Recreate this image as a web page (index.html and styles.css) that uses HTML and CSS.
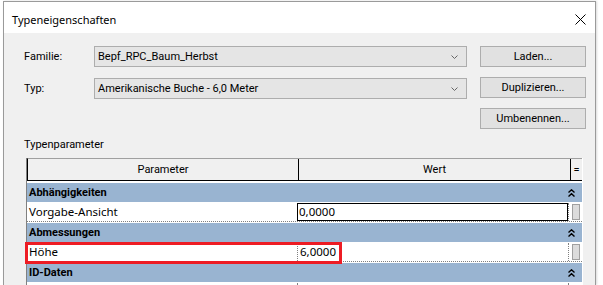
FILE: index.html
```html
<!DOCTYPE html>
<html>
    <head>
        <title>Typeneigenschaften</title>
        <link rel="stylesheet" href="styles.css">
    </head>
    <body>
        <div class="window">
            <div class="titlebar">
                <div class="title">Typeneigenschaften</div>
                <svg class="close" width="11" height="11" viewBox="0 0 11 11"><path d="M0.5 0.5 L10.5 10.5 M10.5 0.5 L0.5 10.5" stroke="#000" stroke-width="1" fill="none"/></svg>
            </div>
            <div class="content">
                <div class="top">
                    <div class="fields">
                        <div class="field">
                            <div class="label">Familie:</div>
                            <div class="select"><span>Bepf_RPC_Baum_Herbst</span><svg width="7" height="4" viewBox="0 0 7 4"><path d="M0.5 0.5 L3.5 3.5 L6.5 0.5" stroke="#666" fill="none"/></svg></div>
                        </div>
                        <div class="field">
                            <div class="label">Typ:</div>
                            <div class="select"><span>Amerikanische Buche - 6,0 Meter</span><svg width="7" height="4" viewBox="0 0 7 4"><path d="M0.5 0.5 L3.5 3.5 L6.5 0.5" stroke="#666" fill="none"/></svg></div>
                        </div>
                    </div>
                    <div class="buttons">
                        <div class="button">Laden...</div>
                        <div class="button">Duplizieren...</div>
                        <div class="button">Umbenennen...</div>
                    </div>
                </div>
                <div class="section-label">Typenparameter</div>
                <div class="grid">
                    <div class="grid-head">
                        <div class="col-name">Parameter</div>
                        <div class="col-value">Wert</div>
                        <div class="col-eq">=</div>
                    </div>
                    <div class="grid-body">
                        <div class="cat">
                            <span>Abhängigkeiten</span>
                            <svg class="fold" width="7" height="8" viewBox="0 0 7 8"><path d="M0.5 3.5 L3.5 0.8 L6.5 3.5 M0.5 7.5 L3.5 4.8 L6.5 7.5" stroke="#000" stroke-width="1.4" fill="none"/></svg>
                        </div>
                        <div class="row">
                            <div class="cell-name">Vorgabe-Ansicht</div>
                            <div class="cell-value editing">0,0000</div>
                            <div class="cell-btn"><span class="mini"></span></div>
                        </div>
                        <div class="cat">
                            <span>Abmessungen</span>
                            <svg class="fold" width="7" height="8" viewBox="0 0 7 8"><path d="M0.5 3.5 L3.5 0.8 L6.5 3.5 M0.5 7.5 L3.5 4.8 L6.5 7.5" stroke="#000" stroke-width="1.4" fill="none"/></svg>
                        </div>
                        <div class="row">
                            <div class="cell-name">Höhe</div>
                            <div class="cell-value">6,0000</div>
                            <div class="cell-btn"><span class="mini"></span></div>
                        </div>
                        <div class="cat">
                            <span>ID-Daten</span>
                            <svg class="fold" width="7" height="8" viewBox="0 0 7 8"><path d="M0.5 3.5 L3.5 0.8 L6.5 3.5 M0.5 7.5 L3.5 4.8 L6.5 7.5" stroke="#000" stroke-width="1.4" fill="none"/></svg>
                        </div>
                        <div class="row">
                            <div class="cell-name"></div>
                            <div class="cell-value"></div>
                            <div class="cell-btn"></div>
                        </div>
                    </div>
                    <div class="highlight"></div>
                </div>
            </div>
        </div>
    </body>
</html>
```

FILE: styles.css
```css
body{
    margin: 0px;
    padding: 0px;
    background: #ffffff;
    font-family: Roboto, "Noto Sans", sans-serif;
    font-size: 11px;
    color: #000000;
    height: 285px;
    overflow: hidden;
}
.window{
    margin: 1px 0 0 3px;
    width: 593px;
    height: 284px;
    box-sizing: border-box;
    border: 1px solid #9a9a9a;
    border-bottom: none;
    box-shadow: 1px 0 2px rgba(0,0,0,0.15);
    display: flex;
    flex-direction: column;
}
.titlebar{
    height: 31px;
    flex-shrink: 0;
    background: #ffffff;
    display: flex;
    align-items: center;
    justify-content: space-between;
    padding: 0 9px 0 8px;
}
.title{
    font-family: "Noto Sans", sans-serif;
    font-size: 11px;
    padding-top: 3px;
}
.close{
    margin-top: 3px;
}
.content{
    background: #f0f0f0;
    flex: 1;
    overflow: hidden;
    padding: 13px 0 0 20px;
}
.top{
    display: flex;
}
.fields{
    display: flex;
    flex-direction: column;
    gap: 11px;
}
.field{
    display: flex;
    align-items: center;
    height: 21px;
}
.label{
    width: 70px;
}
.select{
    width: 373px;
    height: 21px;
    box-sizing: border-box;
    background: #e5e5e5;
    border: 1px solid #adadad;
    display: flex;
    align-items: center;
    justify-content: space-between;
    padding: 0 8px 0 3px;
}
.buttons{
    margin-left: 13px;
    display: flex;
    flex-direction: column;
    gap: 10px;
}
.button{
    width: 106px;
    height: 21px;
    box-sizing: border-box;
    background: #e1e1e1;
    border: 1px solid #adadad;
    text-align: center;
    line-height: 19px;
}
.section-label{
    margin-top: 8px;
    line-height: 16px;
}
.grid{
    position: relative;
    margin: 5px 0 0 2px;
    width: 557px;
    border-left: 1px solid #808080;
    border-right: 1px solid #ffffff;
    box-sizing: border-box;
}
.grid-head{
    display: flex;
    height: 23px;
    box-sizing: border-box;
    border-top: 1px solid #a0a0a0;
    border-bottom: 1px solid #000000;
    border-left: 1px solid #000000;
    background: #f0f0f0;
}
.grid-head > div{
    text-align: center;
    line-height: 21px;
}
.col-name{
    width: 271px;
    border-right: 1px solid #000000;
}
.col-value{
    width: 272px;
    border-right: 1px solid #000000;
}
.col-eq{
    width: 11px;
}
.grid-body{
    padding-top: 2px;
    background: #ffffff;
}
.cat{
    height: 19px;
    margin-bottom: 1px;
    background: #99b4d1;
    font-weight: bold;
    display: flex;
    align-items: center;
    justify-content: space-between;
    padding: 0 7px 0 2px;
}
.row{
    display: flex;
    height: 19px;
    margin-bottom: 1px;
    box-sizing: border-box;
    border-bottom: 1px dotted #808080;
    font-family: "Noto Sans", sans-serif;
    font-size: 11.5px;
}
.cell-name{
    width: 271px;
    padding-left: 2px;
    line-height: 18px;
    box-sizing: border-box;
}
.cell-value{
    width: 272px;
    padding-left: 2px;
    line-height: 18px;
    box-sizing: border-box;
    border-left: 1px dotted #808080;
}
.cell-value.editing{
    border: 1px solid #000000;
    line-height: 16px;
    height: 18px;
    padding-left: 1px;
}
.cell-btn{
    width: 13px;
    display: flex;
    justify-content: center;
    border-left: 1px dotted #808080;
}
.mini{
    width: 8px;
    height: 16px;
    margin-top: 1px;
    background: #dcdcdc;
    border: 1px solid #a0a0a0;
    box-sizing: border-box;
}
.highlight{
    position: absolute;
    left: -2px;
    top: 84px;
    width: 317px;
    height: 22px;
    box-sizing: border-box;
    border: 3px solid #ed1c24;
}
```
